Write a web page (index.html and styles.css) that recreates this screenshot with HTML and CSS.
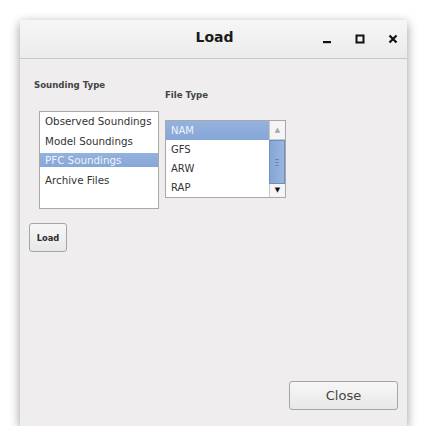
FILE: index.html
```html
<!DOCTYPE html>
<html lang="en">
<head>
    <meta charset="UTF-8">
    <title>Load</title>
    <link rel="stylesheet" href="styles.css">
</head>
<body>
    <div class="window">
        <div class="titlebar">
            <span class="title">Load</span>
            <div class="controls">
                <svg class="ctl" width="10" height="10" viewBox="0 0 10 10"><rect x="1" y="7" width="8" height="2.2" fill="#111"/></svg>
                <svg class="ctl" width="10" height="10" viewBox="0 0 10 10"><rect x="1.5" y="1.5" width="7" height="7" fill="none" stroke="#111" stroke-width="2"/></svg>
                <svg class="ctl" width="10" height="10" viewBox="0 0 10 10"><path d="M1.5 1.5 L8.5 8.5 M8.5 1.5 L1.5 8.5" stroke="#111" stroke-width="2.2"/></svg>
            </div>
        </div>
        <div class="content">
            <div class="panes">
                <div class="col left">
                    <div class="label">Sounding Type</div>
                    <ul class="list sounding">
                        <li>Observed Soundings</li>
                        <li>Model Soundings</li>
                        <li class="selected">PFC Soundings</li>
                        <li>Archive Files</li>
                    </ul>
                    <button class="btn small">Load</button>
                </div>
                <div class="col right">
                    <div class="label">File Type</div>
                    <div class="filebox">
                        <ul class="list files">
                            <li class="selected">NAM</li>
                            <li>GFS</li>
                            <li>ARW</li>
                            <li>RAP</li>
                        </ul>
                        <div class="scrollbar">
                            <div class="arrow up">&#9650;</div>
                            <div class="thumb"><span></span><span></span><span></span></div>
                            <div class="arrow down">&#9660;</div>
                        </div>
                    </div>
                </div>
            </div>
            <div class="footer">
                <button class="btn close">Close</button>
            </div>
        </div>
    </div>
</body>
</html>
```

FILE: styles.css
```css
* {
    box-sizing: border-box;
}

body {
    margin: 0;
    padding: 20px 0 0 20px;
    background: #ffffff;
    font-family: "DejaVu Sans", sans-serif;
}

.window {
    width: 387px;
    height: 406px;
    display: flex;
    flex-direction: column;
    background: #efedee;
    box-shadow: 0 3px 10px rgba(0, 0, 0, 0.4);
}

.titlebar {
    height: 39px;
    flex-shrink: 0;
    display: flex;
    align-items: center;
    justify-content: center;
    padding-bottom: 4px;
    position: relative;
    background: linear-gradient(#f7f6f6, #ecebeb);
    border-bottom: 1px solid #c9c7c7;
}

.title {
    font-size: 14px;
    font-weight: bold;
    color: #1a1a1a;
    margin-left: 2px;
}

.controls {
    position: absolute;
    right: 9px;
    top: 14px;
    display: flex;
    gap: 23px;
}

.content {
    flex: 1;
    display: flex;
    flex-direction: column;
}

.panes {
    display: flex;
    gap: 6px;
}

.col {
    display: flex;
    flex-direction: column;
    align-items: flex-start;
}

.left {
    padding-left: 9px;
}

.label {
    font-size: 8.6px;
    font-weight: bold;
    color: #444444;
    line-height: 12px;
}

.left .label {
    margin: 20px 0 0 5px;
}

.right .label {
    margin-top: 30px;
}

.list {
    list-style: none;
    margin: 0;
    padding: 0;
    background: #ffffff;
    border: 1px solid #a9a7a8;
    font-size: 10.3px;
    color: #333333;
}

.list .selected {
    background: linear-gradient(#95b2de, #86a6d6);
    color: #eef3fb;
}

.sounding {
    width: 120px;
    height: 98px;
    margin: 20px 0 0 10px;
    padding-top: 2px;
    display: flex;
    flex-direction: column;
    gap: 5.7px;
}

.sounding li {
    height: 14px;
    line-height: 14px;
    padding-left: 5px;
}

.filebox {
    margin-top: 19px;
    display: flex;
    width: 121px;
    height: 78px;
    border: 1px solid #a9a7a8;
    background: #ffffff;
}

.files {
    flex: 1;
    border: none;
    font-size: 10px;
}

.files li {
    height: 19px;
    line-height: 19px;
    padding-left: 5px;
}

.scrollbar {
    width: 16px;
    display: flex;
    flex-direction: column;
    background: #e6e4e5;
}

.arrow {
    font-size: 7px;
    text-align: center;
    background: #f6f5f5;
    border-left: 1px solid #c9c7c8;
}

.up {
    height: 19px;
    line-height: 19px;
    color: #a6a6a6;
    border-bottom: 1px solid #c9c7c8;
}

.down {
    height: 13px;
    line-height: 13px;
    color: #111111;
}

.thumb {
    flex: 1;
    display: flex;
    flex-direction: column;
    align-items: center;
    justify-content: center;
    gap: 2px;
    background: linear-gradient(90deg, #86a5d4, #9ab6e0);
    border: 1px solid #6d8fc2;
}

.thumb span {
    width: 4px;
    height: 1px;
    background: #6a89b8;
}

.btn {
    font-family: "DejaVu Sans", sans-serif;
    background: linear-gradient(#f8f7f7, #e9e8e8);
    border: 1px solid #a6a5a5;
    border-radius: 3px;
    color: #2d2d2d;
    padding: 0;
}

.small {
    width: 38px;
    height: 29px;
    margin-top: 14px;
    font-size: 8.3px;
    font-weight: bold;
}

.footer {
    margin-top: auto;
    display: flex;
    justify-content: flex-end;
    padding: 0 9px 16px 0;
}

.close {
    width: 109px;
    height: 29px;
    font-size: 13px;
    color: #454545;
}
```
